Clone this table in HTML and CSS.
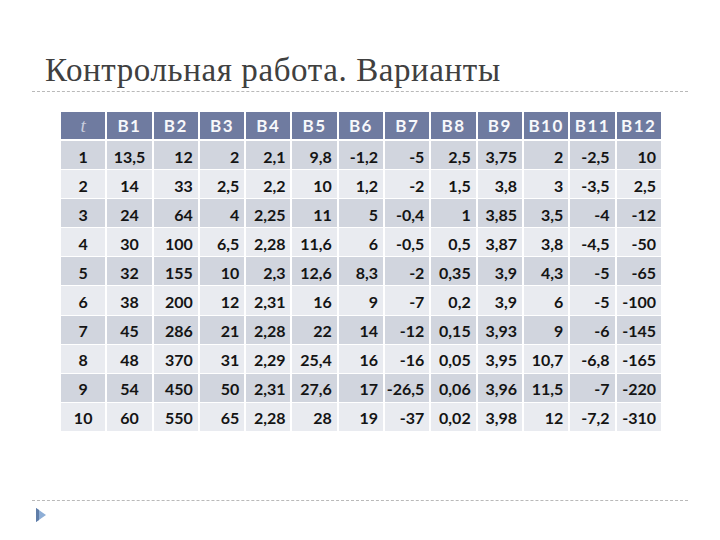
FILE: index.html
```html
<!DOCTYPE html>
<html lang="ru">
<head>
<meta charset="utf-8">
<link rel="stylesheet" href="styles.css">
</head>
<body>
<div class="slide">
  <h1 class="title">Контрольная работа. Варианты</h1>
  <div class="rule"></div>
  <div class="table-wrap">
    <table class="grid">
      <thead>
        <tr><th class="t">t</th><th>В1</th><th>В2</th><th>В3</th><th>В4</th><th>В5</th><th>В6</th><th>В7</th><th>В8</th><th>В9</th><th>В10</th><th>В11</th><th>В12</th></tr>
      </thead>
      <tbody>
        <tr><td class="c">1</td><td class="c">13,5</td><td>12</td><td>2</td><td>2,1</td><td>9,8</td><td>-1,2</td><td>-5</td><td>2,5</td><td>3,75</td><td>2</td><td>-2,5</td><td>10</td></tr>
        <tr><td class="c">2</td><td class="c">14</td><td>33</td><td>2,5</td><td>2,2</td><td>10</td><td>1,2</td><td>-2</td><td>1,5</td><td>3,8</td><td>3</td><td>-3,5</td><td>2,5</td></tr>
        <tr><td class="c">3</td><td class="c">24</td><td>64</td><td>4</td><td>2,25</td><td>11</td><td>5</td><td>-0,4</td><td>1</td><td>3,85</td><td>3,5</td><td>-4</td><td>-12</td></tr>
        <tr><td class="c">4</td><td class="c">30</td><td>100</td><td>6,5</td><td>2,28</td><td>11,6</td><td>6</td><td>-0,5</td><td>0,5</td><td>3,87</td><td>3,8</td><td>-4,5</td><td>-50</td></tr>
        <tr><td class="c">5</td><td class="c">32</td><td>155</td><td>10</td><td>2,3</td><td>12,6</td><td>8,3</td><td>-2</td><td>0,35</td><td>3,9</td><td>4,3</td><td>-5</td><td>-65</td></tr>
        <tr><td class="c">6</td><td class="c">38</td><td>200</td><td>12</td><td>2,31</td><td>16</td><td>9</td><td>-7</td><td>0,2</td><td>3,9</td><td>6</td><td>-5</td><td>-100</td></tr>
        <tr><td class="c">7</td><td class="c">45</td><td>286</td><td>21</td><td>2,28</td><td>22</td><td>14</td><td>-12</td><td>0,15</td><td>3,93</td><td>9</td><td>-6</td><td>-145</td></tr>
        <tr><td class="c">8</td><td class="c">48</td><td>370</td><td>31</td><td>2,29</td><td>25,4</td><td>16</td><td>-16</td><td>0,05</td><td>3,95</td><td>10,7</td><td>-6,8</td><td>-165</td></tr>
        <tr><td class="c">9</td><td class="c">54</td><td>450</td><td>50</td><td>2,31</td><td>27,6</td><td>17</td><td>-26,5</td><td>0,06</td><td>3,96</td><td>11,5</td><td>-7</td><td>-220</td></tr>
        <tr><td class="c">10</td><td class="c">60</td><td>550</td><td>65</td><td>2,28</td><td>28</td><td>19</td><td>-37</td><td>0,02</td><td>3,98</td><td>12</td><td>-7,2</td><td>-310</td></tr>
      </tbody>
    </table>
  </div>
  <div class="footer">
    <div class="rule"></div>
    <svg class="bullet" width="12" height="14" viewBox="0 0 12 14">
      <polygon points="1,0 11,7 1,14" fill="#8eaed6"/>
      <polygon points="1,0 4,2 4,12 1,14" fill="#5f7da8"/>
    </svg>
  </div>
</div>
</body>
</html>
```

FILE: styles.css
```css
html, body {
  margin: 0;
  padding: 0;
  background: #ffffff;
}

.slide {
  width: 720px;
  height: 540px;
  box-sizing: border-box;
  padding: 0 32px;
}

.title {
  margin: 0;
  padding: 50px 0 0 13px;
  font-family: "Liberation Serif", "DejaVu Serif", serif;
  font-weight: normal;
  font-size: 33px;
  line-height: 41px;
  color: #404040;
  letter-spacing: 0.6px;
}

.rule {
  height: 0;
  border-top: 1px dashed #b9b9b9;
}

.table-wrap {
  padding: 20px 0 0 27px;
  height: 388px;
}

.grid {
  width: 604px;
  table-layout: fixed;
  border-collapse: collapse;
  font-family: Lato, "Open Sans", sans-serif;
  font-weight: bold;
}

.grid th {
  background: #6f7ba0;
  color: #f7f8fb;
  height: 27px;
  padding: 0;
  font-size: 17px;
  letter-spacing: 1.5px;
  text-align: center;
  border-left: 2px solid #ffffff;
  border-right: 2px solid #ffffff;
  border-bottom: 2px solid #ffffff;
}

.grid th.t {
  font-family: "Liberation Serif", "DejaVu Serif", serif;
  font-style: italic;
  font-weight: normal;
  letter-spacing: 0;
  font-size: 19px;
  color: #c9cedd;
}

.grid td {
  height: 26.1px;
  padding: 2px 5px 0 0;
  font-size: 16px;
  color: #141414;
  text-align: right;
  border: 2px solid #ffffff;
  border-top-width: 1px;
  border-bottom-width: 1px;
}

.grid td.c {
  text-align: center;
  padding: 2px 0 0 0;
}

.grid tbody tr:nth-child(odd) td {
  background: #d1d5de;
}

.grid tbody tr:nth-child(even) td {
  background: #e9ebf0;
}

.footer .bullet {
  display: block;
  margin: 7px 0 0 3px;
}
```
